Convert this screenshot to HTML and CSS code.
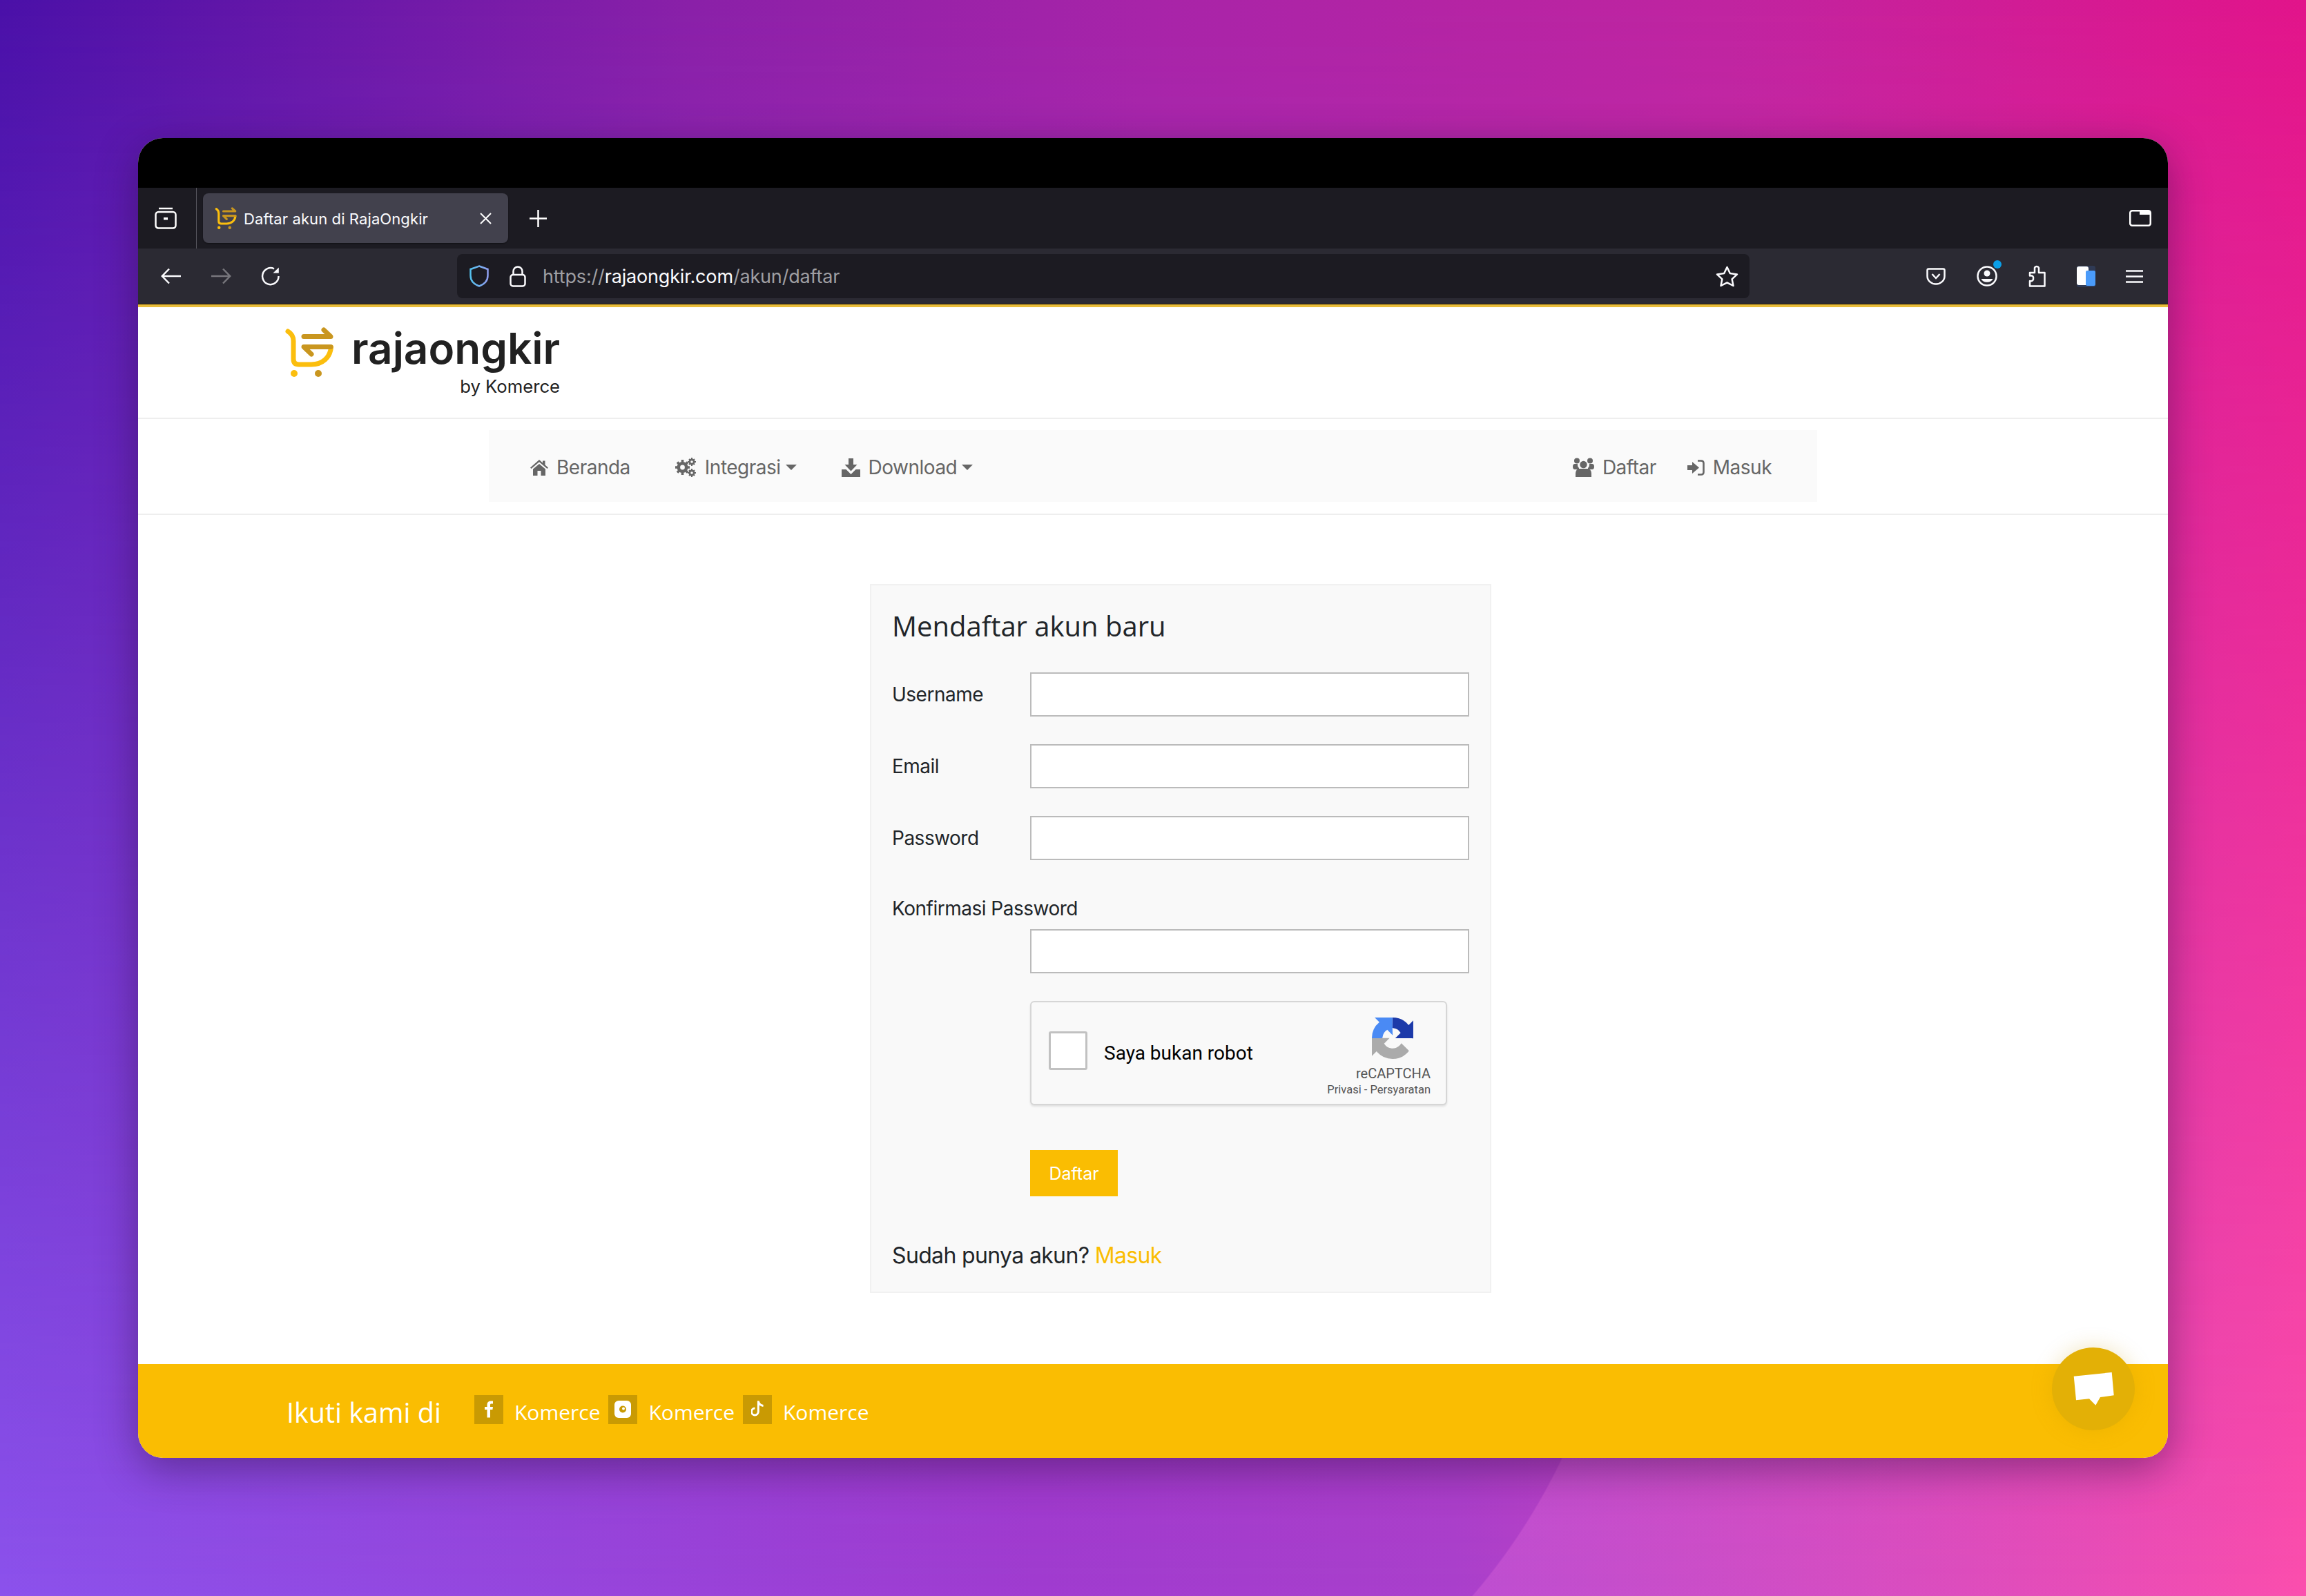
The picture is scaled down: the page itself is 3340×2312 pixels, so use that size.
FILE: index.html
```html
<!DOCTYPE html>
<html lang="id">
<head>
    <meta charset="UTF-8">
    <title>Daftar akun di RajaOngkir</title>
    <link rel="stylesheet" href="styles.css">
</head>
<body>

<svg class="svg-defs" width="0" height="0">
    <defs>
        <symbol id="logoCart" viewBox="0 0 70 72">
            <path d="M4 6 C9 9 12 13 12 20 V46 Q12 54 20 54 H38 C54 54 65 44 66.5 29" fill="none" stroke="#fbbe0e" stroke-width="7" stroke-linecap="round"/>
            <path d="M27 13.5 H66 L56 4" fill="none" stroke="#c9961f" stroke-width="7" stroke-linecap="round" stroke-linejoin="round"/>
            <path d="M66 28.5 H27 L38 39" fill="none" stroke="#c9961f" stroke-width="7" stroke-linecap="round" stroke-linejoin="round"/>
            <circle cx="13" cy="67" r="5" fill="#fbbe0e"/>
            <circle cx="48" cy="67" r="5" fill="#c9961f"/>
        </symbol>
    </defs>
</svg>

<div class="window">
    <div class="titlebar"></div>

    <!-- Barra de pestañas -->
    <div class="tabbar">
        <div class="view-btn">
            <svg width="32" height="32" viewBox="0 0 32 32" fill="none" stroke="#fff" stroke-width="2.5">
                <rect x="1.5" y="7" width="29" height="23.5" rx="4"/>
                <path d="M6 2 H26"/>
                <rect x="13" y="15" width="6" height="3.5" fill="#fff" stroke="none"/>
            </svg>
        </div>
        <div class="tab">
            <svg class="tab-icon" width="32" height="32"><use href="#logoCart"/></svg>
            <span class="tab-title">Daftar akun di RajaOngkir</span>
            <svg class="tab-close" width="17" height="17" viewBox="0 0 17 17" stroke="#fff" stroke-width="2"><path d="M1 1 L16 16 M16 1 L1 16"/></svg>
        </div>
        <svg class="tab-new" width="25" height="25" viewBox="0 0 25 25" stroke="#fff" stroke-width="2.5"><path d="M12.5 0 V25 M0 12.5 H25"/></svg>
        <svg class="tab-list" width="32" height="24" viewBox="0 0 32 24">
            <rect x="1.25" y="1.25" width="29.5" height="21.5" rx="3" fill="none" stroke="#fff" stroke-width="2.5"/>
            <path d="M15 1 H30 Q31 1 31 3 V7 H15 Z" fill="#fff"/>
        </svg>
    </div>

    <!-- Barra de navegación -->
    <div class="toolbar">
        <svg class="btn-back" width="30" height="24" viewBox="0 0 30 24" fill="none" stroke="#fbfbfe" stroke-width="2.5"><path d="M29 12 H2 M12 1.5 L1.8 12 L12 22.5"/></svg>
        <svg class="btn-forward" width="30" height="24" viewBox="0 0 30 24" fill="none" stroke="#77767c" stroke-width="2.5"><path d="M1 12 H28 M18 1.5 L28.2 12 L18 22.5"/></svg>
        <svg class="btn-reload" width="28" height="28" viewBox="0 0 28 28" fill="none" stroke="#fbfbfe" stroke-width="2.5"><path d="M25.5 14 A11.7 12 0 1 1 19 3.4"/><path d="M25.8 1.5 V9.5 H17.5" fill="#fbfbfe" stroke="none"/></svg>
        <div class="urlbar">
            <svg class="url-shield" width="28" height="32" viewBox="0 0 28 32" fill="none" stroke-width="2.5"><defs><linearGradient id="shieldGrad" x1="0" y1="0" x2="1" y2="0"><stop offset="0" stop-color="#54c0ec"/><stop offset="1" stop-color="#8f9ff0"/></linearGradient></defs><path d="M14 1.5 L26.5 6 V15 C26.5 23 21 28 14 30.5 C7 28 1.5 23 1.5 15 V6 Z" stroke="url(#shieldGrad)"/></svg>
            <svg class="url-lock" width="24" height="31" viewBox="0 0 24 31" fill="none" stroke="#fbfbfe" stroke-width="2.5"><rect x="1.5" y="13" width="21" height="16.5" rx="3.5"/><path d="M5.5 13 V8 A6.5 6.5 0 0 1 18.5 8 V13"/></svg>
            <span class="url-text">https://<b>rajaongkir.com</b>/akun/daftar</span>
            <svg class="url-star" width="33" height="31" viewBox="0 0 33 31" fill="none" stroke="#fbfbfe" stroke-width="2.5" stroke-linejoin="round"><path d="M16.5 2 L20.8 11 L31 12.4 L23.6 19.3 L25.5 29 L16.5 24.3 L7.5 29 L9.4 19.3 L2 12.4 L12.2 11 Z"/></svg>
        </div>
        <div class="tool-icons">
            <svg width="28" height="25" viewBox="0 0 28 25" fill="none" stroke="#fbfbfe" stroke-width="2.5"><path d="M3.5 1.5 H24.5 Q26.5 1.5 26.5 3.5 V12 A12.5 11.5 0 0 1 1.5 12 V3.5 Q1.5 1.5 3.5 1.5 Z"/><path d="M8.5 9 L14 15 L19.5 9"/></svg>
            <span class="account">
                <svg width="30" height="30" viewBox="0 0 30 30" fill="none" stroke="#fbfbfe" stroke-width="2.5"><circle cx="15" cy="15" r="13.5"/><circle cx="15" cy="11" r="4.5" fill="#fbfbfe" stroke="none"/><path d="M6.5 19 H23.5 A9 7 0 0 1 6.5 19 Z" fill="#fbfbfe" stroke="none"/></svg>
                <i class="account-dot"></i>
            </span>
            <svg width="26" height="32" viewBox="0 0 26 32" fill="none" stroke="#fbfbfe" stroke-width="2.5" stroke-linejoin="round"><path d="M3 11 H10 V4 A3.2 3 0 0 1 16 4 V11 H24.5 V30.5 H3 V23 C7 24 8.5 21 8 19 C8.5 17 7 14.5 3 15.5 Z"/></svg>
            <svg width="27" height="31" viewBox="0 0 27 31"><rect x="0" y="0" width="27" height="31" rx="3" fill="#2f3a55"/><rect x="0" y="1" width="17" height="27" rx="3" fill="#fff"/><rect x="13" y="7" width="14" height="22" rx="2" fill="#4a9bfa"/></svg>
            <svg width="25" height="19" viewBox="0 0 25 19" stroke="#fbfbfe" stroke-width="2.4"><path d="M0 1.5 H25 M0 9.5 H25 M0 17.5 H25"/></svg>
        </div>
    </div>
    <div class="accent-line"></div>

    <!-- Contenido de la página -->
    <header class="site-header">
        <svg class="site-logo" width="70" height="72"><use href="#logoCart"/></svg>
        <div class="brand">
            <div class="brand-name">rajaongkir</div>
            <div class="brand-sub">by Komerce</div>
        </div>
    </header>

    <div class="nav-wrap">
        <nav class="nav">
            <a class="nav-link">
                <svg width="26" height="23" viewBox="0 0 26 23" fill="#666"><path d="M13 0 L18 4.5 V1.5 H21.5 V7.5 L26 11.5 L24.5 13 L13 3.2 L1.5 13 L0 11.5 Z M4 13.5 L13 6 L22 13.5 V23 H15.5 V16 H10.5 V23 H4 Z"/></svg>
                Beranda
            </a>
            <a class="nav-link nav-gap">
                <svg width="31" height="28" viewBox="0 0 31 28" fill="#666">
                    <path d="M10.5 3 V25 M0 14 H21 M3 6.5 L18 21.5 M18 6.5 L3 21.5" stroke="#666" stroke-width="3.6"/>
                    <circle cx="10.5" cy="14" r="8"/>
                    <circle cx="10.5" cy="14" r="3.4" fill="#fafafa"/>
                    <path d="M24 0 V12 M18 6 H30 M24 16 V28 M18 22 H30 M20 2 L28 10 M28 2 L20 10 M20 18 L28 26 M28 18 L20 26" stroke="#666" stroke-width="2"/>
                    <circle cx="24" cy="6" r="4.5"/>
                    <circle cx="24" cy="22" r="4.5"/>
                    <circle cx="24" cy="6" r="1.8" fill="#fafafa"/>
                    <circle cx="24" cy="22" r="1.8" fill="#fafafa"/>
                </svg>
                Integrasi<i class="caret"></i>
            </a>
            <a class="nav-link nav-gap">
                <svg width="27" height="27" viewBox="0 0 27 27" fill="#666"><path d="M10 0 H17 V9 H22.5 L13.5 18.5 L4.5 9 H10 Z"/><path d="M0 16 H6.5 L13.5 23 L20.5 16 H27 V27 H0 Z"/></svg>
                Download<i class="caret"></i>
            </a>
            <a class="nav-link nav-right">
                <svg width="31" height="28" viewBox="0 0 31 28" fill="#666"><circle cx="6" cy="4.5" r="4"/><circle cx="25" cy="4.5" r="4"/><circle cx="15.5" cy="10" r="5.2"/><path d="M3 9 H7 A7 7 0 0 0 9 15 V17 H3 Q0 17 0 13 Q0 9 3 9 Z M28 9 H24 A7 7 0 0 1 22 15 V17 H28 Q31 17 31 13 Q31 9 28 9 Z"/><path d="M8 16 H23 Q27 18 27 23 V28 H4 V23 Q4 18 8 16 Z"/></svg>
                Daftar
            </a>
            <a class="nav-link nav-gap-small">
                <svg width="25" height="23" viewBox="0 0 25 23" fill="#666"><path d="M0 8 H7 V3 L17 11.5 L7 20 V15 H0 Z"/><path d="M15 1.5 H20 Q23.5 1.5 23.5 5 V18 Q23.5 21.5 20 21.5 H15" fill="none" stroke="#666" stroke-width="2.6"/></svg>
                Masuk
            </a>
        </nav>
    </div>

    <main class="page-body">
        <form class="form-card">
            <h2 class="form-title">Mendaftar akun baru</h2>
            <div class="form-row">
                <label for="username">Username</label>
                <input type="text" id="username" autocomplete="off">
            </div>
            <div class="form-row">
                <label for="email">Email</label>
                <input type="text" id="email" autocomplete="off">
            </div>
            <div class="form-row">
                <label for="password">Password</label>
                <input type="password" id="password" autocomplete="off">
            </div>
            <label class="label-block" for="konfirmasi">Konfirmasi Password</label>
            <input class="input-indent" type="password" id="konfirmasi" autocomplete="off">

            <div class="captcha">
                <span class="captcha-box"></span>
                <span class="captcha-text">Saya bukan robot</span>
                <div class="captcha-brand">
                    <svg width="60" height="60" viewBox="0 0 64 64">
                        <path d="M64 32c0-.5 0-1-.04-1.44V4.5L56.8 11.7A32 32 0 0 0 32 0L31.5 16.1c.5 0 .8.07 1.1.2a15.5 15.5 0 0 1 11.9 7.4l-8.4 8.4c10.6-.04 22.6-.07 28.4.1" fill="#1c3aa9"/>
                        <path d="M31.9 0c-.5 0-1 0-1.4.04H4.4l7.2 7.2A32 32 0 0 0 0 32H16.2c0-.5.07-.8.2-1.1a15.5 15.5 0 0 1 7.4-11.9l8.4 8.4C31.7 17.2 31.6 5.8 31.9 0" fill="#4a8af4"/>
                        <path d="M0 32c0 .5 0 1 .04 1.4v26.1l7.2-7.2A32 32 0 0 0 32 64a32 32 0 0 0 25.4-12.5L45.5 39.6a15.6 15.6 0 0 1-4.7 5.3c-2 1.6-5 2.9-8.9 2.9-.5 0-.8-.07-1.1-.2a15.5 15.5 0 0 1-11.9-7.4l8.4-8.4C17.2 31.9 5.8 32 0 32" fill="#ababab"/>
                    </svg>
                    <div class="captcha-name">reCAPTCHA</div>
                    <div class="captcha-links">Privasi - Persyaratan</div>
                </div>
            </div>

            <button type="button" class="btn-daftar">Daftar</button>
            <p class="form-foot">Sudah punya akun? <a class="link-masuk">Masuk</a></p>
        </form>
    </main>

    <footer class="site-footer">
        <span class="follow">Ikuti kami di</span>
        <a class="social">
            <span class="social-box"><svg width="12" height="25" viewBox="0 0 12 24" fill="#fff"><path d="M3.5 24 V12.5 H0 V8.5 H3.5 V5.5 C3.5 2 5.5 0 9 0 H12 V4 H9.8 C8.4 4 8 4.6 8 6 V8.5 H12 L11.4 12.5 H8 V24 Z"/></svg></span>
            <span>Komerce</span>
        </a>
        <a class="social">
            <span class="social-box"><svg width="24" height="25" viewBox="0 0 24 25"><rect width="24" height="25" rx="6" fill="#fff"/><circle cx="12" cy="12.5" r="5" fill="#c99a03"/><circle cx="13" cy="11.5" r="2" fill="#fff"/></svg></span>
            <span>Komerce</span>
        </a>
        <a class="social">
            <span class="social-box"><svg width="18" height="23" viewBox="0 0 20 25" fill="none" stroke="#fff" stroke-width="3.2"><path d="M11.5 0 V17.5 A5.5 5.5 0 1 1 6 12 M11.5 1 C12.5 5 15 7.5 19.5 8"/></svg></span>
            <span>Komerce</span>
        </a>
    </footer>

    <!-- Botón de chat -->
    <button type="button" class="chat-btn">
        <svg width="60" height="48" viewBox="0 0 60 48" fill="#fff"><path d="M1.7 5.7 L56.7 0 L59.7 33.3 L40 36 L33.3 47.7 L24 38.3 L5 40.3 Z"/></svg>
    </button>
</div>

</body>
</html>
```

FILE: styles.css
```css
html, body {
    margin: 0;
    padding: 0;
}
html {
    background-color: #a840cc;
}
body {
    position: relative;
    z-index: 0;
    width: 3340px;
    height: 2312px;
    overflow: hidden;
    box-sizing: border-box;
    padding: 200px;
    font-family: "Inter", "Liberation Sans", sans-serif;
    color: #212529;
    background-color: #a840cc;
    background-image: linear-gradient(to right, #8c52ec 0%, #a03cd0 45%, #aa40cc 63%, #fb4fae 100%);
}
/* Parte superior del fondo, se desvanece hacia abajo */
body::before {
    content: "";
    position: absolute;
    inset: 0;
    z-index: -1;
    background-image: linear-gradient(to right, #4a10a8 0%, #8a20a8 30%, #a824a8 50%, #c024a0 75%, #e2148a 100%);
    -webkit-mask-image: linear-gradient(to bottom, #000 0%, transparent 100%);
    mask-image: linear-gradient(to bottom, #000 0%, transparent 100%);
}
/* Curva clara de abajo a la derecha */
body::after {
    content: "";
    position: absolute;
    right: 0;
    bottom: 0;
    z-index: -1;
    width: 1240px;
    height: 200px;
    background-image: radial-gradient(circle at -651px -387px, rgba(255, 130, 230, 0) 900px, rgba(255, 130, 230, 0.22) 902px, rgba(255, 130, 230, 0) 1900px);
}
.svg-defs {
    position: absolute;
}

/* Ventana del navegador */
.window {
    position: relative;
    width: 2940px;
    height: 1912px;
    display: flex;
    flex-direction: column;
    background-color: #fff;
    border-radius: 36px;
    overflow: hidden;
    box-shadow: 0 16px 60px rgba(40, 10, 60, 0.45);
}
.titlebar {
    height: 72px;
    background-color: #000;
}
.tabbar {
    height: 88px;
    display: flex;
    align-items: center;
    background-color: #1c1b22;
}
.view-btn {
    width: 85px;
    height: 88px;
    box-sizing: border-box;
    padding: 28px 0 0 24px;
    border-right: 1px solid #55545c;
}
.tab {
    width: 442px;
    height: 72px;
    margin-left: 9px;
    box-sizing: border-box;
    padding: 0 24px 0 17px;
    display: flex;
    align-items: center;
    background-color: #42414d;
    border-radius: 8px;
    box-shadow: 0 1px 2px rgba(0, 0, 0, 0.4);
}
.tab-icon {
    flex: none;
}
.tab-title {
    margin: 2px 0 0 10px;
    flex: 1;
    font-size: 22px;
    letter-spacing: 0.1px;
    color: #fbfbfe;
}
.tab-new {
    margin-left: 31px;
}
.tab-list {
    margin-left: auto;
    margin-right: 24px;
}
.toolbar {
    height: 80px;
    display: flex;
    align-items: center;
    background-color: #2b2a33;
}
.btn-back {
    margin-left: 33px;
}
.btn-forward {
    margin-left: 42px;
}
.btn-reload {
    margin-left: 43px;
}
.urlbar {
    width: 1872px;
    height: 64px;
    margin-left: 256px;
    box-sizing: border-box;
    padding: 0 16px 0 18px;
    display: flex;
    align-items: center;
    background-color: #1c1b22;
    border-radius: 8px;
}
.url-lock {
    margin-left: 30px;
}
.url-text {
    margin-left: 24px;
    font-size: 27px;
    letter-spacing: -0.17px;
    color: #9f9fa3;
}
.url-text b {
    font-weight: 400;
    color: #fbfbfe;
}
.url-star {
    margin-left: auto;
}
.tool-icons {
    margin-left: 256px;
    display: flex;
    align-items: center;
    gap: 44.5px;
}
.account {
    position: relative;
    display: flex;
}
.account-dot {
    position: absolute;
    top: -8px;
    right: -6px;
    width: 12px;
    height: 12px;
    border-radius: 50%;
    background-color: #0b9fe8;
}
.accent-line {
    height: 5px;
    flex: none;
    background-color: #e9bd3a;
    border-top: 1px solid #2a1f08;
    box-sizing: border-box;
}

/* Cabecera del sitio */
.site-header {
    height: 162px;
    flex: none;
    box-sizing: border-box;
    padding: 29px 0 0 213px;
    display: flex;
    align-items: flex-start;
    border-bottom: 2px solid #eee;
}
.brand {
    margin-left: 26px;
    text-align: right;
}
.brand-name {
    font-size: 62px;
    font-weight: 600;
    line-height: 62px;
    color: #212121;
}
.brand-sub {
    margin-top: 7px;
    font-size: 25.7px;
    line-height: 34px;
    color: #212121;
}
.nav-wrap {
    height: 139px;
    flex: none;
    box-sizing: border-box;
    padding-top: 16px;
    border-bottom: 2px solid #eee;
}
.nav {
    width: 1924px;
    height: 104px;
    margin-left: 508px;
    box-sizing: border-box;
    padding: 4px 66px 0 60px;
    display: flex;
    align-items: center;
    background-color: #fafafa;
}
.nav-link {
    display: flex;
    align-items: center;
    gap: 12px;
    font-size: 28px;
    letter-spacing: -0.5px;
    color: #666;
}
.nav-gap {
    margin-left: 65px;
}
.nav-gap-small {
    margin-left: 45px;
}
.nav-right {
    margin-left: auto;
}
.caret {
    width: 0;
    height: 0;
    margin-left: -5px;
    border-top: 8px solid #666;
    border-left: 8px solid transparent;
    border-right: 8px solid transparent;
}

/* Formulario */
.page-body {
    flex: 1;
    display: flex;
    justify-content: center;
    padding: 100px 0 0 0;
}
.form-card {
    width: 900px;
    height: 1027px;
    margin-left: 80px;
    box-sizing: border-box;
    padding: 28px 30px 0 30px;
    background-color: #f9f9f9;
    border: 2px solid #f1f1f1;
}
.form-title {
    margin: 0 0 36px 0;
    font-family: "Open Sans", sans-serif;
    font-size: 40px;
    font-weight: 400;
    line-height: 62px;
}
.form-row {
    display: flex;
    align-items: center;
    margin-bottom: 40px;
}
.form-row label {
    width: 200px;
    flex: none;
}
label {
    font-size: 28px;
    letter-spacing: -0.5px;
}
.label-block {
    display: block;
    line-height: 60px;
    margin-bottom: 0;
}
input {
    width: 636px;
    height: 64px;
    box-sizing: border-box;
    padding: 0 12px;
    background-color: #fff;
    border: 2px solid #bbb;
    outline: none;
}
.input-indent {
    display: block;
    margin-left: 200px;
}
.captcha {
    width: 604px;
    height: 151px;
    margin: 40px 0 0 200px;
    box-sizing: border-box;
    padding-left: 25px;
    display: flex;
    align-items: center;
    background-color: #f9f9f9;
    border: 2px solid #d6d6d6;
    border-radius: 6px;
    box-shadow: 0 2px 3px rgba(0, 0, 0, 0.1);
}
.captcha-box {
    width: 56px;
    height: 56px;
    margin-bottom: 7px;
    box-sizing: border-box;
    background-color: #fff;
    border: 3px solid #c1c1c1;
    border-radius: 3px;
}
.captcha-text {
    margin-left: 24px;
    font-family: "Roboto", sans-serif;
    font-size: 28px;
    font-weight: 400;
    color: #000;
}
.captcha-brand {
    margin: 12px 22px 0 auto;
    display: flex;
    flex-direction: column;
    align-items: flex-end;
    font-family: "Roboto", sans-serif;
    color: #555;
}
.captcha-brand svg {
    margin-right: 25px;
}
.captcha-name {
    margin-top: 8px;
    font-size: 20px;
    line-height: 26px;
}
.captcha-links {
    font-size: 16.5px;
    line-height: 22px;
}
.btn-daftar {
    display: block;
    width: 127px;
    height: 67px;
    margin: 65px 0 0 200px;
    padding: 0;
    font-family: "Inter", sans-serif;
    font-size: 25px;
    color: #fff;
    background-color: #fabd02;
    border: none;
}
.form-foot {
    margin: 64px 0 0 0;
    font-size: 32px;
    letter-spacing: -0.65px;
    line-height: 44px;
}
.link-masuk {
    color: #fabd02;
}

/* Pie de página */
.site-footer {
    height: 136px;
    flex: none;
    box-sizing: border-box;
    padding: 45px 0 0 215px;
    display: flex;
    align-items: flex-start;
    background-color: #fabd02;
    font-family: "Open Sans", sans-serif;
    color: #fff;
}
.follow {
    margin-right: 48px;
    font-size: 39.5px;
    line-height: 50px;
}
.social {
    display: flex;
    align-items: flex-start;
    gap: 16px;
    margin-right: 12px;
    font-size: 30px;
    line-height: 50px;
}
.social-box {
    width: 42px;
    height: 42px;
    padding-top: 8px;
    box-sizing: border-box;
    display: flex;
    justify-content: center;
    align-items: flex-start;
    background-color: #c99a03;
}
.chat-btn {
    position: absolute;
    right: 48px;
    bottom: 40px;
    width: 120px;
    height: 120px;
    padding: 0;
    display: flex;
    justify-content: center;
    align-items: center;
    background-color: #e3b006;
    border: none;
    border-radius: 50%;
    box-shadow: 0 0 30px rgba(200, 150, 0, 0.25);
}
```
